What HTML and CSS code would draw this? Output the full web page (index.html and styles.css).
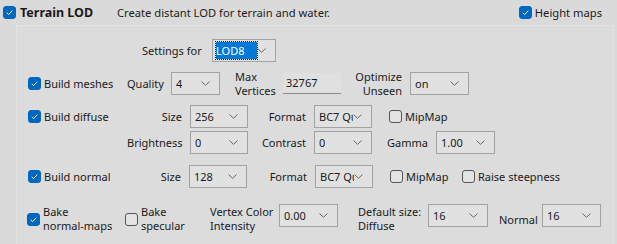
FILE: index.html
```html
<!DOCTYPE html>
<html lang="en">
<head>
    <meta charset="UTF-8">
    <title>Terrain LOD</title>
    <link rel="stylesheet" href="styles.css">
</head>
<body>
    <div class="header">
        <span class="cb on"><svg viewBox="0 0 13 13"><path d="M3.3 6.8 L5.5 9 L9.8 4.3"/></svg></span>
        <span class="title">Terrain LOD</span>
        <span class="desc">Create distant LOD for terrain and water.</span>
        <span class="spacer"></span>
        <span class="cb on"><svg viewBox="0 0 13 13"><path d="M3.3 6.8 L5.5 9 L9.8 4.3"/></svg></span>
        <span class="cb-text">Height maps</span>
    </div>

    <div class="panel">
        <div class="row row-settings">
            <span class="lbl w-settings">Settings for</span>
            <div class="combo w64"><span class="val sel">LOD8</span><svg class="chev" viewBox="0 0 9 5"><path d="M0.5 0.5 L4.5 4.3 L8.5 0.5"/></svg></div>
        </div>

        <div class="row row-meshes">
            <div class="lead">
                <span class="cb on"><svg viewBox="0 0 13 13"><path d="M3.3 6.8 L5.5 9 L9.8 4.3"/></svg></span>
                <span class="cb-text">Build meshes</span>
            </div>
            <span class="lbl r w44">Quality</span>
            <div class="combo w49"><span class="val">4</span><svg class="chev" viewBox="0 0 9 5"><path d="M0.5 0.5 L4.5 4.3 L8.5 0.5"/></svg></div>
            <span class="lbl two w63">Max<br>Vertices</span>
            <div class="field">32767</div>
            <span class="lbl two r w69">Optimize<br>Unseen</span>
            <div class="combo w59"><span class="val">on</span><svg class="chev" viewBox="0 0 9 5"><path d="M0.5 0.5 L4.5 4.3 L8.5 0.5"/></svg></div>
        </div>

        <div class="row row-diffuse">
            <div class="lead">
                <span class="cb on"><svg viewBox="0 0 13 13"><path d="M3.3 6.8 L5.5 9 L9.8 4.3"/></svg></span>
                <span class="cb-text">Build diffuse</span>
            </div>
            <span class="lbl r w63">Size</span>
            <div class="combo w58"><span class="val">256</span><svg class="chev" viewBox="0 0 9 5"><path d="M0.5 0.5 L4.5 4.3 L8.5 0.5"/></svg></div>
            <span class="lbl r w66">Format</span>
            <div class="combo w58"><span class="val">BC7 Qu</span><svg class="chev" viewBox="0 0 9 5"><path d="M0.5 0.5 L4.5 4.3 L8.5 0.5"/></svg></div>
            <span class="cb gap17"></span>
            <span class="cb-text">MipMap</span>
        </div>

        <div class="row row-bright">
            <div class="lead"></div>
            <span class="lbl r w63">Brightness</span>
            <div class="combo w58"><span class="val">0</span><svg class="chev" viewBox="0 0 9 5"><path d="M0.5 0.5 L4.5 4.3 L8.5 0.5"/></svg></div>
            <span class="lbl r w66">Contrast</span>
            <div class="combo w58"><span class="val">0</span><svg class="chev" viewBox="0 0 9 5"><path d="M0.5 0.5 L4.5 4.3 L8.5 0.5"/></svg></div>
            <span class="lbl r w64">Gamma</span>
            <div class="combo w59"><span class="val">1.00</span><svg class="chev" viewBox="0 0 9 5"><path d="M0.5 0.5 L4.5 4.3 L8.5 0.5"/></svg></div>
        </div>

        <div class="row row-normal">
            <div class="lead">
                <span class="cb on"><svg viewBox="0 0 13 13"><path d="M3.3 6.8 L5.5 9 L9.8 4.3"/></svg></span>
                <span class="cb-text">Build normal</span>
            </div>
            <span class="lbl r w62">Size</span>
            <div class="combo w58"><span class="val">128</span><svg class="chev" viewBox="0 0 9 5"><path d="M0.5 0.5 L4.5 4.3 L8.5 0.5"/></svg></div>
            <span class="lbl r w68">Format</span>
            <div class="combo w58"><span class="val">BC7 Qu</span><svg class="chev" viewBox="0 0 9 5"><path d="M0.5 0.5 L4.5 4.3 L8.5 0.5"/></svg></div>
            <span class="cb gap17"></span>
            <span class="cb-text mip">MipMap</span>
            <span class="cb"></span>
            <span class="cb-text">Raise steepness</span>
        </div>

        <div class="row row-bake">
            <div class="lead-bake">
                <span class="cb on"><svg viewBox="0 0 13 13"><path d="M3.3 6.8 L5.5 9 L9.8 4.3"/></svg></span>
                <span class="cb-text two">Bake<br>normal-maps</span>
            </div>
            <span class="cb"></span>
            <span class="cb-text two spec">Bake<br>specular</span>
            <span class="lbl two w69">Vertex Color<br>Intensity</span>
            <div class="combo w59 top"><span class="val">0.00</span><svg class="chev" viewBox="0 0 9 5"><path d="M0.5 0.5 L4.5 4.3 L8.5 0.5"/></svg></div>
            <span class="lbl two w70 ml20">Default size:<br>Diffuse</span>
            <div class="combo w60 top"><span class="val">16</span><svg class="chev" viewBox="0 0 9 5"><path d="M0.5 0.5 L4.5 4.3 L8.5 0.5"/></svg></div>
            <span class="lbl w43 ml10">Normal</span>
            <div class="combo w59 top"><span class="val">16</span><svg class="chev" viewBox="0 0 9 5"><path d="M0.5 0.5 L4.5 4.3 L8.5 0.5"/></svg></div>
        </div>
    </div>
</body>
</html>
```

FILE: styles.css
```css
body {
    margin: 0;
    background-color: #dadada;
    font-family: 'Noto Sans', sans-serif;
    font-size: 11px;
    color: #1a1a1a;
    height: 244px;
    overflow: hidden;
}
.header {
    display: flex;
    align-items: center;
    height: 25px;
    padding-left: 3px;
    padding-right: 15px;
    font-size: 11.2px;
}
.title {
    font-weight: bold;
    font-size: 12.5px;
    margin-left: 4px;
    width: 97px;
}
.desc {
    white-space: nowrap;
}
.spacer {
    flex: 1;
}
.panel {
    margin-left: 16px;
    margin-right: 3px;
    border: 1px solid #e3e3e3;
    border-bottom: none;
    height: 230px;
    background-color: #dcdcdc;
}
.row {
    display: flex;
    align-items: center;
    padding-left: 11px;
}
.row-settings {
    margin-top: 13px;
    height: 23px;
}
.row-settings .w-settings {
    margin-left: 114px;
    width: 70px;
}
.row-meshes {
    margin-top: 8px;
    height: 27px;
}
.row-diffuse {
    margin-top: 8px;
    height: 23px;
}
.row-bright {
    margin-top: 3px;
    height: 23px;
}
.row-normal {
    margin-top: 11px;
    height: 23px;
}
.row-bake {
    margin-top: 16px;
    height: 30px;
    padding-left: 10px;
}
.lead {
    display: flex;
    align-items: center;
    width: 99px;
    flex: none;
}
.lead-bake {
    display: flex;
    align-items: center;
    width: 98px;
    flex: none;
}
.cb {
    flex: none;
    box-sizing: border-box;
    width: 13px;
    height: 13px;
    border: 1px solid #555;
    border-radius: 3px;
    background-color: #e4e4e4;
    display: flex;
}
.cb.on {
    background-color: #0067c0;
    border-color: #0067c0;
}
.cb svg {
    width: 11px;
    height: 11px;
    fill: none;
    stroke: #fff;
    stroke-width: 1.1;
}
.cb-text {
    margin-left: 3px;
    white-space: nowrap;
    flex: none;
}
.cb-text.two {
    line-height: 14px;
}
.cb-text.mip {
    width: 56px;
}
.cb-text.spec {
    width: 69px;
}
.lbl {
    flex: none;
    white-space: nowrap;
    box-sizing: border-box;
}
.lbl.r {
    text-align: right;
    padding-right: 8px;
}
.lbl.two {
    line-height: 14px;
}
.row-meshes .lbl.two:not(.r) {
    padding-left: 15px;
}
.combo {
    flex: none;
    box-sizing: border-box;
    height: 23px;
    border: 1px solid #a2a2a2;
    background-color: #e1e1e1;
    display: flex;
    align-items: center;
    justify-content: space-between;
    padding: 0 9px 0 4px;
}
.combo.top {
    align-self: flex-start;
}
.val {
    white-space: nowrap;
    overflow: hidden;
}
.val.sel {
    background-color: #0078d7;
    color: #fff;
    width: 42px;
    height: 17px;
    line-height: 17px;
    box-sizing: border-box;
    outline: 1px dotted #222;
    margin-left: -1px;
}
.chev {
    width: 9px;
    height: 5px;
    fill: none;
    stroke: #666;
    stroke-width: 1;
    flex: none;
}
.field {
    flex: none;
    box-sizing: border-box;
    width: 58px;
    height: 21px;
    line-height: 20px;
    padding-left: 3px;
    background-color: #e0e0e0;
    border-bottom: 1px solid #8a8a8a;
}
.w43 { width: 43px; }
.w44 { width: 44px; }
.w49 { width: 49px; }
.w58 { width: 58px; }
.w59 { width: 59px; }
.w60 { width: 60px; }
.w62 { width: 62px; }
.w63 { width: 63px; }
.w64 { width: 64px; }
.w66 { width: 66px; }
.w68 { width: 68px; }
.w69 { width: 69px; }
.w70 { width: 70px; }
.gap17 { margin-left: 17px; }
.ml20 { margin-left: 20px; }
.ml10 { margin-left: 11px; }
```
